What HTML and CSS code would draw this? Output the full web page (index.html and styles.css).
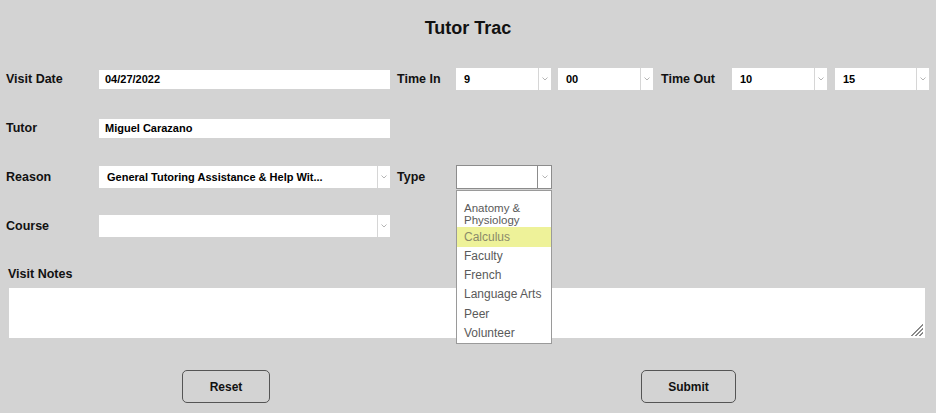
FILE: index.html
```html
<!DOCTYPE html>
<html lang="en">
<head>
<meta charset="utf-8">
<title>Tutor Trac</title>
<link rel="stylesheet" href="styles.css">
</head>
<body>
<div class="page">
  <h1 class="title">Tutor Trac</h1>
  <div class="form">
    <div class="row">
      <span class="label label-main">Visit Date</span>
      <input class="input" type="text" value="04/27/2022" readonly>
      <span class="label label-timein">Time In</span>
      <div class="select w95"><span class="val">9</span><span class="arrow"><svg width="6" height="4" viewBox="0 0 6 4"><path d="M0.5 0.5 L3 3 L5.5 0.5" fill="none" stroke="#b5b5b5" stroke-width="1"/></svg></span></div>
      <div class="select w95 ml7"><span class="val">00</span><span class="arrow"><svg width="6" height="4" viewBox="0 0 6 4"><path d="M0.5 0.5 L3 3 L5.5 0.5" fill="none" stroke="#b5b5b5" stroke-width="1"/></svg></span></div>
      <span class="label label-timeout">Time Out</span>
      <div class="select w95"><span class="val">10</span><span class="arrow"><svg width="6" height="4" viewBox="0 0 6 4"><path d="M0.5 0.5 L3 3 L5.5 0.5" fill="none" stroke="#b5b5b5" stroke-width="1"/></svg></span></div>
      <div class="select w94 ml8"><span class="val">15</span><span class="arrow"><svg width="6" height="4" viewBox="0 0 6 4"><path d="M0.5 0.5 L3 3 L5.5 0.5" fill="none" stroke="#b5b5b5" stroke-width="1"/></svg></span></div>
    </div>
    <div class="row">
      <span class="label label-main">Tutor</span>
      <input class="input" type="text" value="Miguel Carazano" readonly>
    </div>
    <div class="row">
      <span class="label label-main">Reason</span>
      <div class="select w291"><span class="val">General Tutoring Assistance &amp; Help Wit...</span><span class="arrow"><svg width="6" height="4" viewBox="0 0 6 4"><path d="M0.5 0.5 L3 3 L5.5 0.5" fill="none" stroke="#b5b5b5" stroke-width="1"/></svg></span></div>
      <span class="label label-type">Type</span>
      <div class="type-wrap">
        <div class="select open w96"><span class="val"></span><span class="arrow"><svg width="6" height="4" viewBox="0 0 6 4"><path d="M0.5 0.5 L3 3 L5.5 0.5" fill="none" stroke="#b5b5b5" stroke-width="1"/></svg></span></div>
        <ul class="list">
          <li class="opt two">Anatomy &amp;<br>Physiology</li>
          <li class="opt hl">Calculus</li>
          <li class="opt">Faculty</li>
          <li class="opt">French</li>
          <li class="opt">Language Arts</li>
          <li class="opt">Peer</li>
          <li class="opt">Volunteer</li>
        </ul>
      </div>
    </div>
    <div class="row">
      <span class="label label-main">Course</span>
      <div class="select w291"><span class="val"></span><span class="arrow"><svg width="6" height="4" viewBox="0 0 6 4"><path d="M0.5 0.5 L3 3 L5.5 0.5" fill="none" stroke="#b5b5b5" stroke-width="1"/></svg></span></div>
    </div>
  </div>
  <div class="label notes-label">Visit Notes</div>
  <textarea class="notes"></textarea>
  <div class="actions">
    <button class="btn btn-reset" type="button">Reset</button>
    <button class="btn btn-submit" type="button">Submit</button>
  </div>
</div>
</body>
</html>
```
FILE: styles.css
```css
body {
  margin: 0;
  background: #d3d3d3;
  font-family: "Liberation Sans", Arial, sans-serif;
  color: #111;
}
.page {
  padding-top: 16px;
}
.title {
  margin: 0;
  text-align: center;
  font-size: 18px;
  line-height: 24px;
  font-weight: bold;
}
.form {
  display: grid;
  grid-auto-rows: 22px;
  row-gap: 27px;
  margin-top: 28px;
  padding-left: 6px;
}
.row {
  display: flex;
  align-items: center;
}
.label {
  font-weight: bold;
  font-size: 12.5px;
  line-height: 16px;
}
.label-main { width: 93px; flex: none; }
.label-timein { width: 59px; margin-left: 7px; flex: none; }
.label-timeout { width: 71px; margin-left: 8px; flex: none; }
.label-type { width: 59px; margin-left: 7px; flex: none; }
.input {
  width: 291px;
  height: 19px;
  box-sizing: border-box;
  border: none;
  outline: none;
  margin: 0;
  padding: 0 0 0 6px;
  background: #fff;
  font-family: "Liberation Sans", Arial, sans-serif;
  font-weight: bold;
  font-size: 11px;
  color: #000;
}
.select {
  display: flex;
  height: 22px;
  box-sizing: border-box;
  background: #fff;
  flex: none;
}
.w95 { width: 95px; }
.w94 { width: 94px; }
.w96 { width: 96px; }
.w291 { width: 291px; }
.ml7 { margin-left: 7px; }
.ml8 { margin-left: 8px; }
.select .val {
  flex: 1;
  display: flex;
  align-items: center;
  padding-left: 8px;
  font-weight: bold;
  font-size: 11px;
  color: #000;
  white-space: nowrap;
  overflow: hidden;
}
.select .arrow {
  width: 13px;
  box-sizing: border-box;
  border-left: 1px solid #d6d6d6;
  display: flex;
  align-items: center;
  justify-content: center;
}
.select.open {
  height: 24px;
  border: 1px solid #8c8c8c;
}
.select.open .arrow {
  width: 14px;
  border-left-color: #8c8c8c;
}
.type-wrap {
  position: relative;
}
.list {
  position: absolute;
  top: 25px;
  left: 0;
  width: 96px;
  height: 154px;
  box-sizing: border-box;
  margin: 0;
  padding: 8px 0 0;
  list-style: none;
  background: #fff;
  border: 1px solid #9a9a9a;
  z-index: 2;
}
.opt {
  height: 19.2px;
  padding-left: 7px;
  font-size: 12px;
  line-height: 19.2px;
  color: #5a5a5a;
  white-space: nowrap;
}
.opt.two {
  height: 28px;
  box-sizing: border-box;
  padding-top: 3px;
  font-size: 11.5px;
  line-height: 12px;
}
.opt.hl {
  height: 20px;
  line-height: 20px;
  background: #eef299;
  color: #8a8a6a;
}
.notes-label {
  margin-top: 29px;
  padding-left: 8px;
}
.notes {
  display: block;
  margin: 6px 0 0 9px;
  width: 916px;
  height: 50px;
  box-sizing: border-box;
  border: none;
  outline: none;
  resize: none;
  background-color: #fff;
  background-image:
    linear-gradient(to bottom right, #fff 50%, transparent 50%),
    repeating-linear-gradient(-45deg, #fff 0, #fff 1.6px, #8a8a8a 1.6px, #8a8a8a 3px);
  background-size: 13px 13px, 13px 13px;
  background-position: right 2px bottom 2px, right 2px bottom 2px;
  background-repeat: no-repeat;
}
.actions {
  display: flex;
  margin-top: 32px;
  padding-left: 182px;
}
.btn {
  height: 33px;
  box-sizing: border-box;
  background: transparent;
  border: 1px solid #555;
  border-radius: 5px;
  font-family: "Liberation Sans", Arial, sans-serif;
  font-weight: bold;
  font-size: 12px;
  color: #111;
  padding: 0;
}
.btn-reset { width: 88px; }
.btn-submit { width: 95px; margin-left: 371px; }
```
